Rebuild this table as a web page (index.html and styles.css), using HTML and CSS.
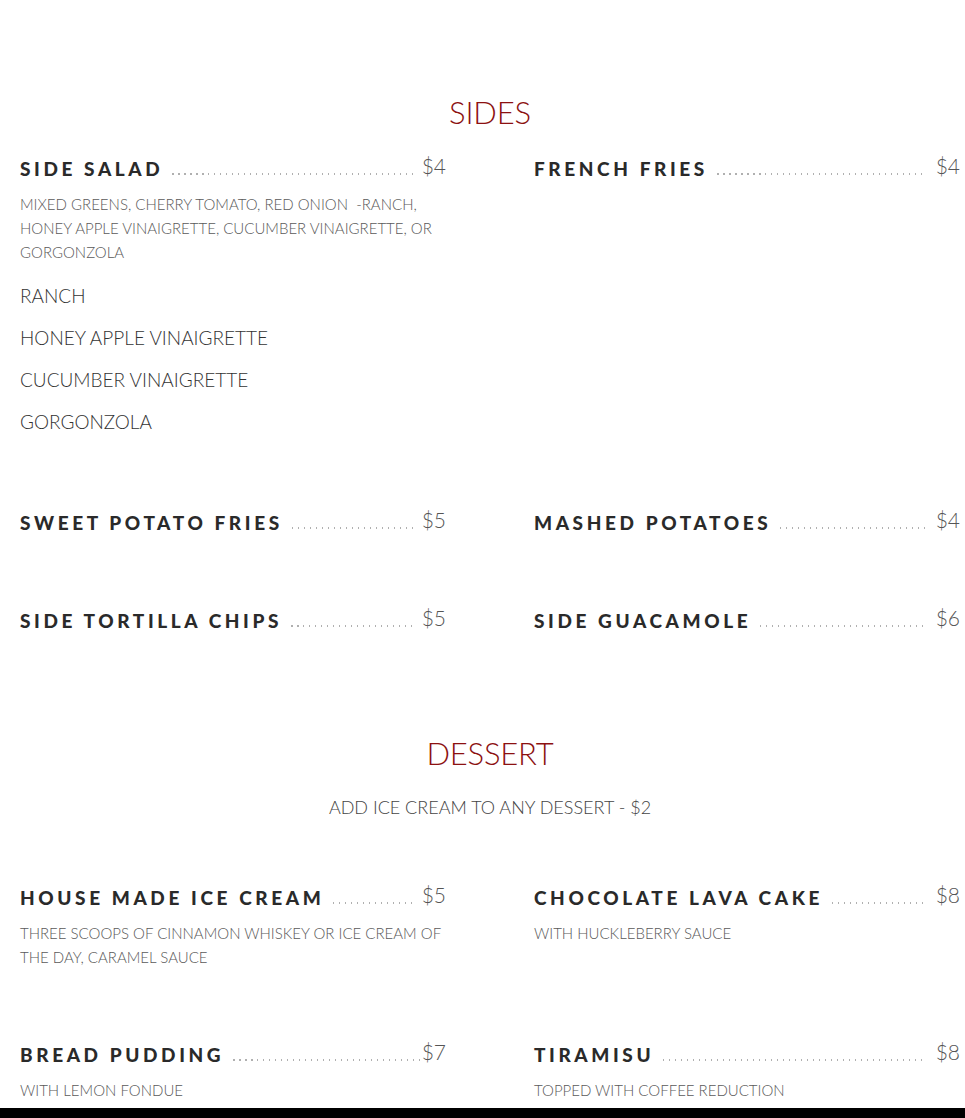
FILE: index.html
```html
<!DOCTYPE html>
<html>
<head>
<meta charset="utf-8">
<link rel="stylesheet" href="styles.css">
</head>
<body>
<main class="menu">
  <section class="section sides">
    <h2 class="section-title">SIDES</h2>
    <div class="grid">
      <div class="item">
        <div class="item-head"><span class="name">Side Salad</span><span class="leader"></span><span class="price">$4</span></div>
        <p class="desc">MIXED GREENS, CHERRY TOMATO, RED ONION &nbsp;-RANCH, HONEY APPLE VINAIGRETTE, CUCUMBER VINAIGRETTE, OR GORGONZOLA</p>
        <ul class="options">
          <li>RANCH</li>
          <li>HONEY APPLE VINAIGRETTE</li>
          <li>CUCUMBER VINAIGRETTE</li>
          <li>GORGONZOLA</li>
        </ul>
      </div>
      <div class="item">
        <div class="item-head"><span class="name">French Fries</span><span class="leader"></span><span class="price">$4</span></div>
      </div>
      <div class="item">
        <div class="item-head"><span class="name">Sweet Potato Fries</span><span class="leader"></span><span class="price">$5</span></div>
      </div>
      <div class="item">
        <div class="item-head"><span class="name">Mashed Potatoes</span><span class="leader"></span><span class="price">$4</span></div>
      </div>
      <div class="item">
        <div class="item-head"><span class="name">Side Tortilla Chips</span><span class="leader"></span><span class="price">$5</span></div>
      </div>
      <div class="item">
        <div class="item-head"><span class="name">Side Guacamole</span><span class="leader"></span><span class="price">$6</span></div>
      </div>
    </div>
  </section>
  <section class="section dessert">
    <h2 class="section-title">DESSERT</h2>
    <p class="note">ADD ICE CREAM TO ANY DESSERT - $2</p>
    <div class="grid">
      <div class="item">
        <div class="item-head"><span class="name">House Made Ice Cream</span><span class="leader"></span><span class="price">$5</span></div>
        <p class="desc">THREE SCOOPS OF CINNAMON WHISKEY OR ICE CREAM OF THE DAY, CARAMEL SAUCE</p>
      </div>
      <div class="item">
        <div class="item-head"><span class="name">Chocolate Lava Cake</span><span class="leader"></span><span class="price">$8</span></div>
        <p class="desc">WITH HUCKLEBERRY SAUCE</p>
      </div>
      <div class="item">
        <div class="item-head"><span class="name">Bread Pudding</span><span class="leader tight"></span><span class="price">$7</span></div>
        <p class="desc">WITH LEMON FONDUE</p>
      </div>
      <div class="item">
        <div class="item-head"><span class="name">Tiramisu</span><span class="leader"></span><span class="price">$8</span></div>
        <p class="desc">TOPPED WITH COFFEE REDUCTION</p>
      </div>
    </div>
  </section>
</main>
<footer class="footer"></footer>
</body>
</html>
```

FILE: styles.css
```css
html, body {
  margin: 0;
  padding: 0;
  background: #ffffff;
}

body {
  font-family: Lato, "Open Sans", sans-serif;
  color: #333333;
}

.menu {
  padding: 92px 5px 0 20px;
}

.section-title {
  margin: 0;
  text-align: center;
  font-family: Lato, sans-serif;
  font-weight: 300;
  font-size: 31px;
  line-height: 40px;
  color: #8c1111;
  letter-spacing: -0.2px;
}

.sides .section-title {
  margin-bottom: 23px;
}

.dessert {
  padding-top: 100px;
}

.note {
  margin: 21px 0 0;
  text-align: center;
  font-weight: 300;
  font-size: 18px;
  line-height: 26px;
  color: #444444;
}

.dessert .grid {
  margin-top: 64px;
}

.grid {
  display: grid;
  grid-template-columns: 1fr 1fr;
  column-gap: 88px;
  row-gap: 72px;
  align-items: start;
}

.item-head {
  display: flex;
  align-items: baseline;
  height: 26px;
}

.name {
  font-family: Lato, sans-serif;
  font-weight: 900;
  font-size: 19px;
  line-height: 26px;
  text-transform: uppercase;
  letter-spacing: 3.6px;
  color: #2a2a2a;
  white-space: nowrap;
}

.leader {
  flex: 1;
  align-self: flex-end;
  height: 2px;
  margin: 0 9px 6px 9px;
  background-image: repeating-linear-gradient(to right, #b0b0b0 0, #b0b0b0 1.5px, transparent 1.5px, transparent 6px);
}

.leader.tight {
  margin-right: 2px;
}

.price {
  font-weight: 300;
  font-size: 21px;
  line-height: 26px;
  color: #555555;
  position: relative;
  top: -2px;
}

.desc {
  margin: 11px 0 0;
  font-weight: 300;
  font-size: 15px;
  line-height: 24px;
  color: #5a5a5a;
}

.options {
  list-style: none;
  margin: 19px 0 2px;
  padding: 0;
  display: flex;
  flex-direction: column;
  gap: 16px;
}

.options li {
  font-weight: 300;
  font-size: 19px;
  line-height: 26px;
  color: #333333;
}

.footer {
  margin-top: 6px;
  height: 80px;
  background: #000000;
}
```
